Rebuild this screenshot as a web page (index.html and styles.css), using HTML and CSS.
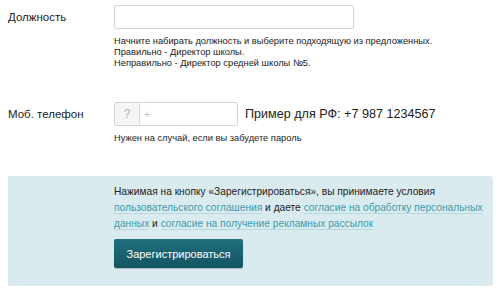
FILE: index.html
```html
<!DOCTYPE html>
<html lang="ru">
<head>
<meta charset="utf-8">
<link rel="stylesheet" href="styles.css">
</head>
<body>
<div class="form">
  <div class="row row-post">
    <div class="label">Должность</div>
    <div class="field">
      <input class="input input-post" type="text">
      <div class="hint">Начните набирать должность и выберите подходящую из предложенных.<br>Правильно - Директор школы.<br>Неправильно - Директор средней школы №5.</div>
    </div>
  </div>
  <div class="row row-phone">
    <div class="label">Моб. телефон</div>
    <div class="field">
      <div class="phone-line">
        <div class="phone">
          <span class="phone-code">?</span>
          <span class="phone-num">+</span>
        </div>
        <span class="example">Пример для РФ: +7 987 1234567</span>
      </div>
      <div class="hint hint-phone">Нужен на случай, если вы забудете пароль</div>
    </div>
  </div>
  <div class="panel">
    <p class="terms">Нажимая на кнопку «Зарегистрироваться», вы принимаете условия <a href="#">пользовательского соглашения</a> и даете <a href="#">согласие на обработку персональных данных</a> и <a href="#">согласие на получение рекламных рассылок</a></p>
    <button class="btn" type="button">Зарегистрироваться</button>
  </div>
</div>
</body>
</html>
```
FILE: styles.css
```css
html, body {
  margin: 0;
  padding: 0;
  background: #ffffff;
}
body {
  font-family: "Liberation Sans", Arial, sans-serif;
  color: #222222;
}
.form {
  padding: 5px 7px 0 8px;
}
.row {
  display: flex;
}
.label {
  width: 106px;
  flex: none;
  font-size: 11.5px;
  line-height: 24px;
  color: #222;
}
.field {
  flex: 1;
}
.input {
  display: block;
  box-sizing: border-box;
  height: 24px;
  border: 1px solid #d4d4d4;
  border-radius: 2px;
  background: #fff;
  margin: 0;
  padding: 0 6px;
  outline: none;
}
.input-post {
  width: 240px;
}
.hint {
  font-size: 9.3px;
  line-height: 11px;
  color: #222;
  margin-top: 7px;
}
.row-phone {
  margin-top: 33px;
}
.phone-line {
  display: flex;
  align-items: center;
}
.phone {
  display: flex;
  box-sizing: border-box;
  width: 124px;
  height: 24px;
  border: 1px solid #d4d4d4;
  border-radius: 2px;
  overflow: hidden;
}
.phone-code {
  width: 24px;
  flex: none;
  background: #f5f5f5;
  border-right: 1px solid #dcdcdc;
  color: #b0b0b0;
  font-size: 12px;
  line-height: 22px;
  text-align: center;
}
.phone-num {
  color: #c4c4c4;
  font-size: 11px;
  line-height: 22px;
  padding-left: 4px;
}
.example {
  margin-left: 7px;
  font-size: 12.6px;
  color: #222;
}
.hint-phone {
  margin-top: 7px;
}
.panel {
  margin-top: 32px;
  background: #daebef;
  border-radius: 0 3px 3px 0;
  padding: 8px 0 18px 106px;
}
.terms {
  margin: 0;
  font-size: 10.2px;
  line-height: 16px;
  color: #222;
}
.terms a {
  color: #3d9aac;
  text-decoration: none;
  border-bottom: 1px solid #b6d8e0;
}
.btn {
  display: block;
  margin-top: 7px;
  width: 129px;
  height: 29px;
  border: none;
  border-radius: 2px;
  background: linear-gradient(#20707e, #135461);
  color: #ffffff;
  font-family: "Liberation Sans", Arial, sans-serif;
  font-size: 11px;
  padding: 0;
  box-shadow: 0 1px 1px rgba(0,0,0,0.2);
}
```
